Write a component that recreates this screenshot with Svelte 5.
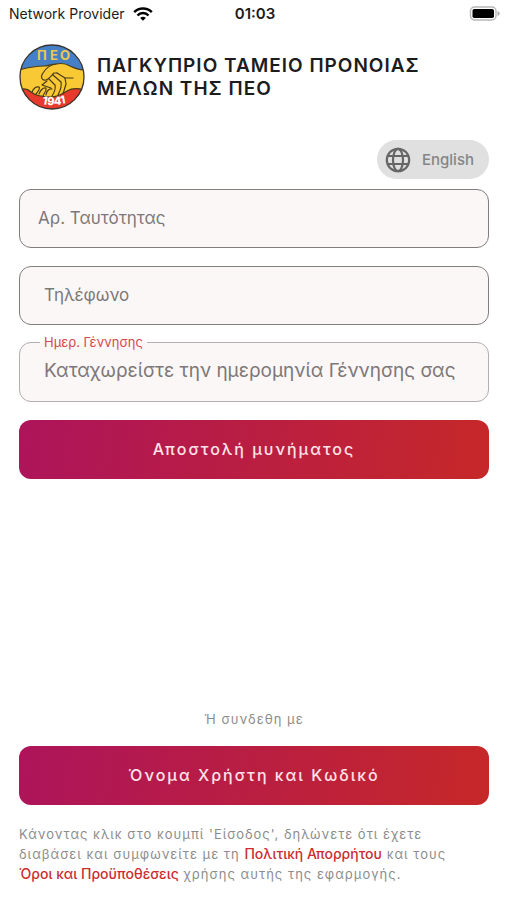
<script lang="ts">
  let idNumber = '';
  let phone = '';
  let birthDate = '';
</script>

<div class="screen">
  <div class="status-bar">
    <div class="carrier">
      <span>Network Provider</span>
      <svg width="20" height="14" viewBox="0 0 20 14" aria-hidden="true">
        <g fill="none" stroke="#000" stroke-width="2.5">
          <path d="M1.2 5.2C6 0.3 14 0.3 18.8 5.2" />
          <path d="M4.5 8.5C7.5 5.3 12.5 5.3 15.5 8.5" />
        </g>
        <path d="M10 13.7L7.2 10.9C8.8 9.4 11.2 9.4 12.8 10.9Z" fill="#000" />
      </svg>
    </div>
    <span class="clock">01:03</span>
    <svg class="battery" width="32" height="15" viewBox="0 0 32 15" aria-hidden="true">
      <rect x="1.5" y="1" width="25.5" height="13" rx="4" fill="#fff" stroke="#b8b8b8" stroke-width="1.4" />
      <rect x="3.5" y="3" width="21.5" height="9" rx="1.8" fill="#000" />
      <path d="M28.5 5C31.5 6 31.5 9 28.5 10Z" fill="#b0b0b0" />
    </svg>
  </div>

  <header>
    <svg class="logo" width="66" height="66" viewBox="0 0 66 66" role="img" aria-label="ΠΕΟ 1941">
      <defs>
        <clipPath id="badge"><circle cx="33" cy="33" r="32" /></clipPath>
      </defs>
      <g clip-path="url(#badge)">
        <rect width="66" height="66" fill="#f8c935" />
        <path d="M0 0H66V26C61 26 57 25 51 22C46 19 42 19 37 20C32 20 29 22 25 22C18 22 11 23 0 26Z" fill="#457fc5" />
        <path d="M0 46C5 44 9 45 12 48C17 52 24 53 32 53C39 53 43 50 48 47C53 44 59 44 66 46V66H0Z" fill="#e83a2c" />
        <g fill="none" stroke="#4a3a16" stroke-width="1.2" stroke-linecap="round" stroke-linejoin="round">
          <path d="M0 26C11 23 18 22 25 22C29 22 32 20 37 20C42 19 46 19 51 22C57 25 61 26 66 26" />
          <path d="M37 20C31 21 27 24 24 29C21 33 23 37 27 36C30 35 32 32 35 29L38 29" />
          <path d="M38 29L46 34L54 34" />
          <path d="M46 34L47 40L44 50" />
          <path d="M34 31L42 38C43 42 41 47 39 51" />
          <path d="M30 35L36 41C37 45 35 49 33 52" />
          <path d="M28 37L23 41L32 44" />
          <path d="M13 48C14 45 17 42 20 43C22 45 18 48 17 50" />
          <path d="M20 50C21 47 24 43 27 44C28 47 25 49 24 52" />
          <path d="M27 51C27 48 30 44 33 45" />
          <path d="M0 46C5 44 9 45 12 48C17 52 24 53 32 53C39 53 43 50 48 47C53 44 59 44 66 46" />
        </g>
      </g>
      <circle cx="33" cy="33" r="32" fill="none" stroke="#3a3330" stroke-width="1.3" />
      <text x="18 31 41" y="16" class="logo-name">ΠΕΟ</text>
      <text x="23 28 35 42" y="60 61 61 60" rotate="10 3 -3 -10" class="logo-year">1941</text>
    </svg>
    <h1>ΠΑΓΚΥΠΡΙΟ ΤΑΜΕΙΟ ΠΡΟΝΟΙΑΣ ΜΕΛΩΝ ΤΗΣ ΠΕΟ</h1>
  </header>

  <main>
    <button type="button" class="language">
      <svg width="26" height="26" viewBox="0 0 26 26" aria-hidden="true">
        <g fill="none" stroke="#666" stroke-width="2.2">
          <circle cx="13" cy="13" r="11.2" />
          <ellipse cx="13" cy="13" rx="5" ry="11.2" />
          <path d="M2.5 9H23.5M2.5 17H23.5" />
        </g>
      </svg>
      <span>English</span>
    </button>

    <form on:submit|preventDefault>
      <input class="field" type="text" placeholder="Αρ. Ταυτότητας" aria-label="Αρ. Ταυτότητας" bind:value={idNumber} />
      <input class="field phone" type="tel" placeholder="Τηλέφωνο" aria-label="Τηλέφωνο" bind:value={phone} />
      <fieldset>
        <legend><label for="birth-date">Ημερ. Γέννησης</label></legend>
        <input
          id="birth-date"
          type="text"
          placeholder="Καταχωρείστε την ημερομηνία Γέννησης σας"
          bind:value={birthDate}
        />
      </fieldset>
      <button type="submit" class="action">Αποστολή μυνήματος</button>
    </form>
  </main>

  <footer>
    <p class="divider">Ή συνδεθη με</p>
    <button type="button" class="action">Όνομα Χρήστη και Κωδικό</button>
    <p class="terms">
      Κάνοντας κλικ στο κουμπί 'Είσοδος', δηλώνετε ότι έχετε διαβάσει και συμφωνείτε με τη
      <a href="#privacy">Πολιτική Απορρήτου</a> και τους
      <a href="#terms">Όροι και Προϋποθέσεις</a> χρήσης αυτής της εφαρμογής.
    </p>
  </footer>
</div>

<style>
  :global(body) {
    margin: 0;
    background: #fff;
  }

  .screen {
    box-sizing: border-box;
    min-height: 100vh;
    display: flex;
    flex-direction: column;
    padding-bottom: 16px;
    font-family: Inter, 'Liberation Sans', sans-serif;
    color: #1c1c1e;
  }

  .status-bar {
    display: grid;
    grid-template-columns: 1fr auto 1fr;
    align-items: center;
    height: 27px;
    padding: 0 6px 0 9px;
    font-size: 14px;
    line-height: 20px;
  }

  .carrier {
    display: flex;
    align-items: center;
    gap: 8px;
    white-space: nowrap;
  }

  .clock {
    font-size: 15px;
    font-weight: 600;
  }

  .battery {
    justify-self: end;
  }

  header {
    display: flex;
    align-items: center;
    gap: 12px;
    padding: 17px 18px 0 19px;
  }

  .logo {
    flex: none;
  }

  .logo-name {
    font-size: 13px;
    font-weight: 700;
    fill: #e9c850;
  }

  .logo-year {
    font-size: 11px;
    font-weight: 800;
    fill: #fff;
  }

  h1 {
    max-width: 340px;
    margin: 0;
    font-size: 19px;
    font-weight: 600;
    line-height: 23px;
    letter-spacing: 1px;
  }

  main {
    display: flex;
    flex-direction: column;
    gap: 10px;
    padding: 30px 18px 0 19px;
  }

  button,
  input {
    font-family: inherit;
  }

  .language {
    align-self: flex-end;
    display: flex;
    align-items: center;
    gap: 11px;
    height: 39px;
    padding: 0 15px 0 8px;
    border: none;
    border-radius: 20px;
    background: #e0e0e0;
    color: #858585;
    font-size: 15px;
    font-weight: 500;
    cursor: pointer;
  }

  form {
    display: flex;
    flex-direction: column;
    gap: 18px;
  }

  input::placeholder {
    color: #7d7878;
    opacity: 1;
  }

  .field {
    box-sizing: border-box;
    width: 100%;
    height: 59px;
    padding: 0 18px 2px;
    border: 1px solid #827e7e;
    border-radius: 12px;
    background: #fcf7f7;
    font-size: 17px;
  }

  .phone {
    padding: 0 24px 2px;
  }

  fieldset {
    min-width: 0;
    height: 68px;
    box-sizing: border-box;
    margin: -9px 0 0;
    padding: 0 20px;
    border: 1px solid #b3afaf;
    border-radius: 12px;
    background: #fcf7f7;
  }

  legend {
    padding: 0 4px;
    color: #d5484c;
    font-size: 13px;
    line-height: 16px;
  }

  fieldset input {
    width: 100%;
    height: 40px;
    padding: 0 4px;
    border: none;
    background: transparent;
    box-sizing: border-box;
    font-size: 19px;
  }

  .action {
    width: 100%;
    height: 59px;
    padding: 0 0 2px;
    border: none;
    border-radius: 12px;
    background: linear-gradient(100deg, #ad145b, #c62828);
    color: #ffe3e8;
    font-size: 16px;
    font-weight: 500;
    letter-spacing: 2px;
    cursor: pointer;
  }

  footer {
    margin-top: auto;
    padding: 0 18px 0 19px;
  }

  .divider {
    margin: 0 0 17px;
    text-align: center;
  }

  .divider,
  .terms {
    color: #8c8c8c;
    font-size: 13px;
    line-height: 20px;
    letter-spacing: 1px;
  }

  .terms {
    margin: 19px 0 0;
    padding-right: 12px;
  }

  .terms a {
    color: #cb2d30;
    font-size: 14px;
    font-weight: 500;
    letter-spacing: 0;
    text-decoration: none;
  }
</style>
